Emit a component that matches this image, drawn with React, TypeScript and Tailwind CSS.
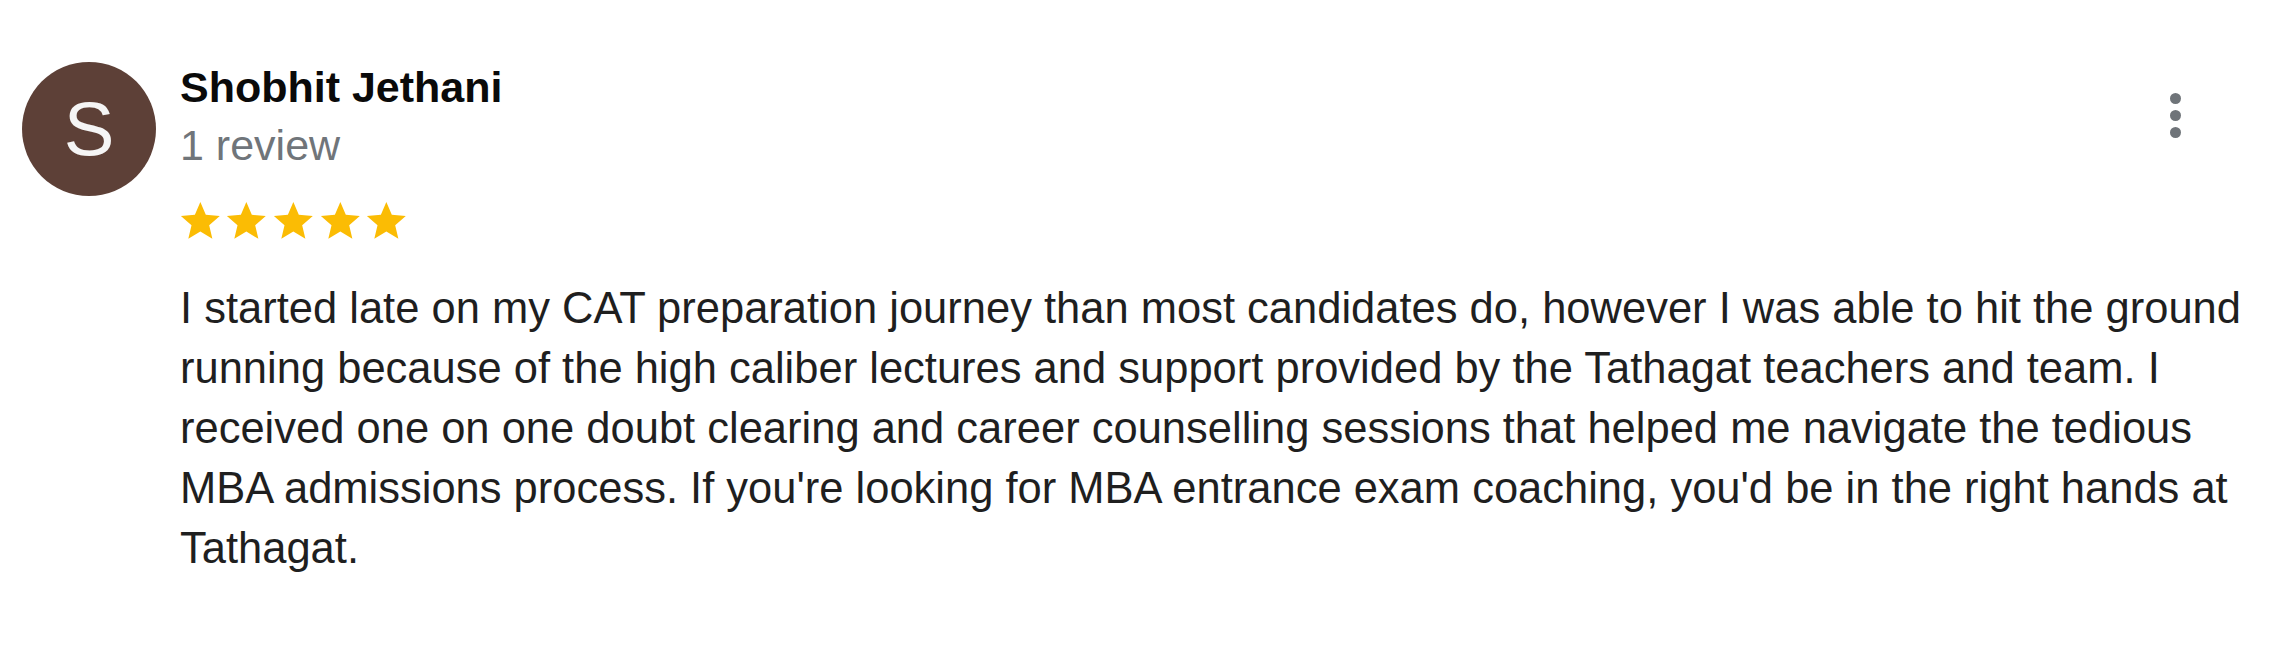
const STAR_PATH = 'M12 17.27L18.18 21l-1.64-7.03L22 9.24l-7.19-.61L12 2 9.19 8.63 2 9.24l5.46 4.73L5.82 21z';

function Star() {
  return (
    <svg viewBox="0 0 24 24" className="w-[46.7px] h-[46.7px] shrink-0" fill="#fbbc04">
      <path d={STAR_PATH} />
    </svg>
  );
}

export default function App() {
  const review =
    "I started late on my CAT preparation journey than most candidates do, however I was able to hit the ground running because of the high caliber lectures and support provided by the Tathagat teachers and team. I received one on one doubt clearing and career counselling sessions that helped me navigate the tedious MBA admissions process. If you're looking for MBA entrance exam coaching, you'd be in the right hands at Tathagat.";

  return (
    <div className="w-[2281px] h-[660px] bg-white flex items-start pt-[57px] pl-[22px] pr-[6px] font-['Liberation_Sans',Arial,sans-serif]">
      {/* Avatar */}
      <div className="mt-[5px] w-[134px] h-[134px] shrink-0 rounded-full bg-[#5d4037] flex items-center justify-center">
        <span className="text-[76px] leading-none text-[#f5f5f5] font-normal">S</span>
      </div>

      <div className="ml-[24px] flex-1 min-w-0">
        {/* Header */}
        <div className="flex items-start justify-between">
          <div>
            <div className="text-[43px] leading-[60px] font-bold text-[#0a0a0a]">Shobhit Jethani</div>
            <div className="-mt-[2px] text-[43px] leading-[60px] text-[#70757a]">1 review</div>
          </div>
          <button className="mt-[36px] mr-[94.5px] flex flex-col items-center gap-[6px]" aria-label="More options">
            <span className="w-[11px] h-[11px] rounded-full bg-[#6f7479]" />
            <span className="w-[11px] h-[11px] rounded-full bg-[#6f7479]" />
            <span className="w-[11px] h-[11px] rounded-full bg-[#6f7479]" />
          </button>
        </div>

        {/* Rating */}
        <div className="mt-[23px] -ml-[3.3px] flex">
          <Star />
          <Star />
          <Star />
          <Star />
          <Star />
        </div>

        {/* Body */}
        <p className="mt-[33px] text-[43.5px] leading-[60px] text-[#1f1f1f]">{review}</p>
      </div>
    </div>
  );
}
